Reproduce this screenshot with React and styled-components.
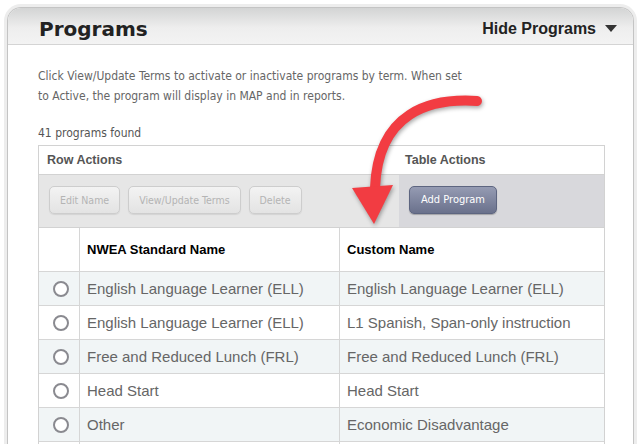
import React from 'react'
import styled, { createGlobalStyle } from 'styled-components'

const GlobalStyle = createGlobalStyle`
  html, body { margin: 0; padding: 0; background: #fff; }
  body { font-family: "Liberation Sans", Arial, sans-serif; }
`

const programs = [
  ['English Language Learner (ELL)', 'English Language Learner (ELL)'],
  ['English Language Learner (ELL)', 'L1 Spanish, Span-only instruction'],
  ['Free and Reduced Lunch (FRL)', 'Free and Reduced Lunch (FRL)'],
  ['Head Start', 'Head Start'],
  ['Other', 'Economic Disadvantage'],
  ['', ''],
]

const Page = styled.div`
  position: relative;
  height: 444px;
  overflow: hidden;
  padding: 7px 0 0 7px;
  box-sizing: border-box;
`

const Panel = styled.section`
  width: 625px;
  border: 1px solid #c4c4c4;
  border-bottom: none;
  border-radius: 14px 14px 0 0;
  box-shadow: 0 0 0 3px #ededed;
`

const PanelHeader = styled.header`
  height: 37px;
  display: flex;
  align-items: center;
  justify-content: space-between;
  padding: 5px 16px 0 31px;
  box-sizing: border-box;
  border-radius: 13px 13px 0 0;
  border-bottom: 1px solid #d4d4d4;
  background: linear-gradient(#d3d4d4, #eeeeee 55%, #f3f3f3);
`

const Title = styled.h1`
  margin: 0;
  font-family: "DejaVu Sans", Verdana, sans-serif;
  font-size: 20px;
  font-weight: bold;
  color: #222;
`

const Toggle = styled.div`
  display: flex;
  align-items: center;
  gap: 9px;
  font-size: 16px;
  font-weight: bold;
  color: #222;
`

const Caret = styled.span`
  width: 0;
  height: 0;
  border-left: 6px solid transparent;
  border-right: 6px solid transparent;
  border-top: 7px solid #333;
`

const PanelBody = styled.div`
  padding: 21px 27px 0 30px;
`

const Intro = styled.p`
  margin: 0;
  font-family: "DejaVu Sans Condensed", "DejaVu Sans", sans-serif;
  font-size: 12px;
  line-height: 20px;
  color: #666;
  width: 426px;
`

const Count = styled.div`
  margin-top: 19px;
  font-family: "DejaVu Sans Condensed", "DejaVu Sans", sans-serif;
  font-size: 12px;
  line-height: 16px;
  color: #555;
`

const Table = styled.div`
  margin-top: 4px;
  width: 565px;
  border: 1px solid #d2d2d2;
  border-bottom: none;
`

const ActionsHead = styled.div`
  display: grid;
  grid-template-columns: 360px 1fr;
  height: 28px;
  align-items: center;
  border-bottom: 1px solid #d2d2d2;
  font-size: 12.5px;
  font-weight: bold;
  color: #555;
  & > span { padding-left: 8px; }
  & > span + span { padding-left: 6px; }
`

const ActionsBar = styled.div`
  display: grid;
  grid-template-columns: 360px 1fr;
  height: 52px;
  border-bottom: 1px solid #d2d2d2;
`

const ButtonGroup = styled.div`
  display: flex;
  align-items: center;
  gap: 8px;
  padding: 0 0 3px 10px;
  background: ${p => (p.dark ? '#d8d8dc' : '#e6e6e6')};
`

const Button = styled.button`
  height: 28px;
  padding: 0 ${p => (p.primary ? 11 : 10)}px;
  border-radius: 5px;
  font-family: "DejaVu Sans Condensed", "DejaVu Sans", sans-serif;
  font-size: ${p => (p.primary ? 11 : 10.5)}px;
  cursor: default;
  ${p =>
    p.primary
      ? `
    border: 1px solid #5d6580;
    background: linear-gradient(#959bb3, #6a718c);
    color: #fff;
    box-shadow: 0 1px 1px rgba(0,0,0,0.25);
  `
      : `
    border: 1px solid #cdcdcd;
    background: linear-gradient(#f3f3f3, #e3e3e3);
    color: #b4b4b4;
    box-shadow: 0 1px 1px rgba(0,0,0,0.08);
  `}
`

const Row = styled.div`
  display: grid;
  grid-template-columns: 40px 260px 1fr;
  height: ${p => (p.head ? 43 : 33)}px;
  border-bottom: 1px solid #d6d6d6;
  background: ${p => (p.shade ? '#f1f5f6' : '#fff')};
  & > div + div { border-left: 1px solid #d6d6d6; }
`

const Cell = styled.div`
  display: flex;
  align-items: center;
  justify-content: ${p => (p.center ? 'center' : 'flex-start')};
  padding-left: ${p => (p.center ? 0 : 7)}px;
  font-size: ${p => (p.head ? 13 : 15)}px;
  font-weight: ${p => (p.head ? 'bold' : 'normal')};
  color: ${p => (p.head ? '#000' : '#666')};
  white-space: nowrap;
`

const Radio = styled.span`
  width: 12px;
  height: 12px;
  margin-left: 3px;
  border: 2px solid #8a8a90;
  border-radius: 50%;
  background: #fff;
`

const Arrow = styled.svg`
  position: absolute;
  left: 0;
  top: 0;
  pointer-events: none;
  filter: drop-shadow(1px 2px 2px rgba(0, 0, 0, 0.35));
`

const App = () => {
  return (
    <>
      <GlobalStyle />
      <Page>
        <Panel>
          <PanelHeader>
            <Title>Programs</Title>
            <Toggle>
              Hide Programs <Caret />
            </Toggle>
          </PanelHeader>
          <PanelBody>
            <Intro>
              Click View/Update Terms to activate or inactivate programs by term. When set to
              Active, the program will display in MAP and in reports.
            </Intro>
            <Count>41 programs found</Count>
            <Table>
              <ActionsHead>
                <span>Row Actions</span>
                <span>Table Actions</span>
              </ActionsHead>
              <ActionsBar>
                <ButtonGroup>
                  <Button>Edit Name</Button>
                  <Button>View/Update Terms</Button>
                  <Button>Delete</Button>
                </ButtonGroup>
                <ButtonGroup dark>
                  <Button primary>Add Program</Button>
                </ButtonGroup>
              </ActionsBar>
              <Row head>
                <Cell />
                <Cell head>NWEA Standard Name</Cell>
                <Cell head>Custom Name</Cell>
              </Row>
              {programs.map(([std, custom], i) => (
                <Row key={i} shade={i % 2 === 0}>
                  <Cell center>
                    <Radio />
                  </Cell>
                  <Cell>{std}</Cell>
                  <Cell>{custom}</Cell>
                </Row>
              ))}
            </Table>
          </PanelBody>
        </Panel>
        <Arrow width="637" height="444" viewBox="0 0 637 444">
          <path
            d="M477 101 C430 98 378 112 375 188"
            fill="none"
            stroke="#f23c42"
            strokeWidth="10"
            strokeLinecap="round"
          />
          <polygon points="352,188 393,185 374,224" fill="#f23c42" />
        </Arrow>
      </Page>
    </>
  )
}

export default App
